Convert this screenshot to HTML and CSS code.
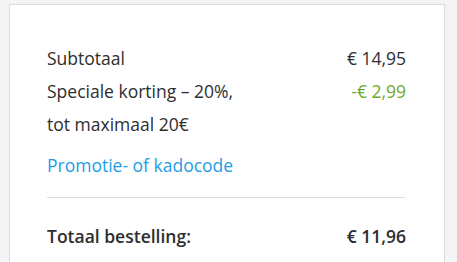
FILE: index.html
```html
<!DOCTYPE html>
<html lang="nl">
<head>
<meta charset="utf-8">
<link rel="stylesheet" href="styles.css">
</head>
<body>
<div class="card">
  <div class="rows">
    <div class="row">
      <span class="label">Subtotaal</span>
      <span class="value">€ 14,95</span>
    </div>
    <div class="row">
      <span class="label label-wrap">Speciale korting – 20%, tot maximaal 20€</span>
      <span class="value discount">-€ 2,99</span>
    </div>
  </div>
  <a class="promo" href="#">Promotie- of kadocode</a>
  <div class="divider"></div>
  <div class="row total">
    <span class="label">Totaal bestelling:</span>
    <span class="value">€ 11,96</span>
  </div>
</div>
</body>
</html>
```

FILE: styles.css
```css
html, body {
  margin: 0;
  padding: 0;
  background: #f4f4f6;
  height: 100%;
  overflow: hidden;
}
body {
  font-family: "Open Sans", "Noto Sans", sans-serif;
  color: #2e2e2e;
  font-size: 17.5px;
}
.card {
  margin: 4px 0 0 9px;
  width: 436px;
  box-sizing: border-box;
  height: 258px;
  background: #fff;
  border: 1px solid #dcdcdc;
  border-bottom: 0;
  padding: 37px 38px 0 37px;
}
.row {
  display: flex;
  justify-content: space-between;
  align-items: flex-start;
  line-height: 33px;
}
.label-wrap {
  max-width: 200px;
}
.discount {
  color: #73a82b;
}
.promo {
  display: block;
  margin-top: 8px;
  line-height: 33px;
  color: #1c9de6;
  text-decoration: none;
}
.divider {
  height: 1px;
  background: #dcdcdc;
  margin: 15px 1px 0 0;
}
.total {
  margin-top: 22px;
  font-weight: 600;
}
```
